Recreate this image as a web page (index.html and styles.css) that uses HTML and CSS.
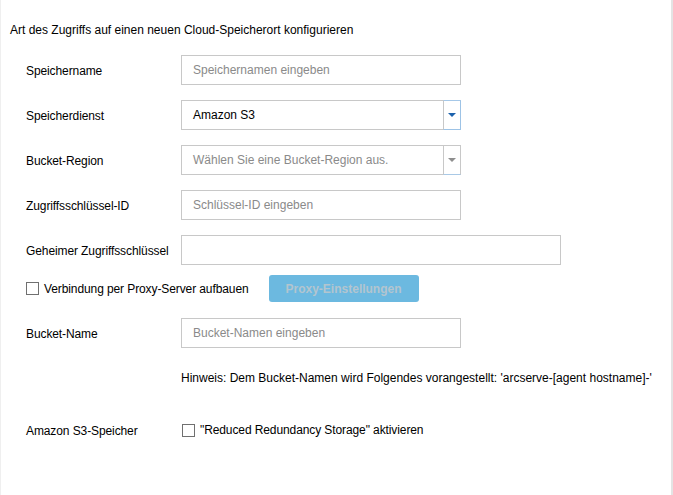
FILE: index.html
```html
<!DOCTYPE html>
<html lang="de">
<head>
<meta charset="utf-8">
<title>Cloud-Speicherort</title>
<link rel="stylesheet" href="styles.css">
</head>
<body>
<div class="panel">
  <div class="title">Art des Zugriffs auf einen neuen Cloud-Speicherort konfigurieren</div>
  <div class="form">
    <div class="row r1">
      <div class="label">Speichername</div>
      <div class="input"><span class="ph">Speichernamen eingeben</span></div>
    </div>
    <div class="row">
      <div class="label">Speicherdienst</div>
      <div class="select active">
        <span class="value">Amazon S3</span>
        <span class="arrow"><span class="tri"></span></span>
      </div>
    </div>
    <div class="row">
      <div class="label">Bucket-Region</div>
      <div class="select">
        <span class="value ph">Wählen Sie eine Bucket-Region aus.</span>
        <span class="arrow"><span class="tri"></span></span>
      </div>
    </div>
    <div class="row">
      <div class="label">Zugriffsschlüssel-ID</div>
      <div class="input"><span class="ph">Schlüssel-ID eingeben</span></div>
    </div>
    <div class="row">
      <div class="label">Geheimer Zugriffsschlüssel</div>
      <div class="input wide"></div>
    </div>
    <div class="proxy-row">
      <label class="check"><span class="box"></span><span class="ctext">Verbindung per Proxy-Server aufbauen</span></label>
      <button class="btn" type="button">Proxy-Einstellungen</button>
    </div>
    <div class="row bucket">
      <div class="label">Bucket-Name</div>
      <div class="input"><span class="ph">Bucket-Namen eingeben</span></div>
    </div>
    <div class="hint">Hinweis: Dem Bucket-Namen wird Folgendes vorangestellt: 'arcserve-[agent hostname]-'</div>
    <div class="row s3">
      <div class="label">Amazon S3-Speicher</div>
      <label class="check"><span class="box"></span><span class="ctext">"Reduced Redundancy Storage" aktivieren</span></label>
    </div>
  </div>
</div>
</body>
</html>
```
FILE: styles.css
```css
html, body {
  margin: 0;
  padding: 0;
  background: #ffffff;
}
.panel {
  box-sizing: border-box;
  width: 673px;
  height: 495px;
  border-left: 1px solid #efefef;
  border-right: 2px solid #e4e4e4;
  font-family: "Liberation Sans", Arial, sans-serif;
  font-size: 12px;
  color: #000;
}
.title {
  padding: 22px 0 0 9px;
  line-height: 16px;
  font-size: 12px;
}
.form {
  display: flex;
  flex-direction: column;
  padding-left: 25px;
}
.row {
  display: flex;
  align-items: center;
  height: 30px;
  margin-top: 15px;
}
.row.r1 { margin-top: 17px; }
.label {
  width: 155px;
  flex: none;
  line-height: 16px;
  letter-spacing: -0.1px;
  padding-top: 2px;
}
.input, .select {
  box-sizing: border-box;
  width: 280px;
  height: 30px;
  border: 1px solid #c8c8c8;
  display: flex;
  align-items: center;
  padding-left: 11px;
  font-family: "Liberation Sans", Arial, sans-serif;
  font-size: 12px;
}
.input.wide { width: 380px; }
.ph { color: #8a8a8a; }
.select {
  padding-left: 0;
  justify-content: space-between;
}
.select .value { padding-left: 11px; }
.select .arrow {
  box-sizing: border-box;
  width: 18px;
  height: 30px;
  margin: -1px -1px -1px 0;
  border-left: 1px solid #c8c8c8;
  border-top: 1px solid #c8c8c8;
  border-right: 1px solid #c8c8c8;
  border-bottom: 1px solid #a9c9e6;
  display: flex;
  align-items: center;
  justify-content: center;
}
.select.active .arrow {
  border-top-color: #a6c8e8;
  border-right-color: #9dc3e6;
  border-bottom-color: #9dc3e6;
}
.tri {
  width: 0;
  height: 0;
  border-left: 4px solid transparent;
  border-right: 4px solid transparent;
  border-top: 4px solid #8e8e8e;
}
.select.active .tri { border-top-color: #1c62ad; }
.proxy-row {
  display: flex;
  align-items: center;
  margin-top: 10px;
  height: 27px;
}
.check {
  display: flex;
  align-items: center;
  gap: 5px;
  line-height: 16px;
}
.ctext { letter-spacing: -0.1px; }
.box {
  box-sizing: border-box;
  width: 13px;
  height: 13px;
  border: 1px solid #707070;
  background: #fff;
  flex: none;
}
.btn {
  margin-left: 20px;
  width: 150px;
  height: 27px;
  border: none;
  border-radius: 3px;
  background: #6cb9e0;
  color: #b3c5cf;
  font-family: "Liberation Sans", Arial, sans-serif;
  font-weight: bold;
  font-size: 12px;
  padding: 0;
}
.row.bucket { margin-top: 16px; }
.hint {
  margin-top: 22px;
  padding-left: 155px;
  line-height: 16px;
}
.row.s3 {
  margin-top: 36px;
  height: 16px;
}
.row.s3 .check { margin-left: 1px; }
```
